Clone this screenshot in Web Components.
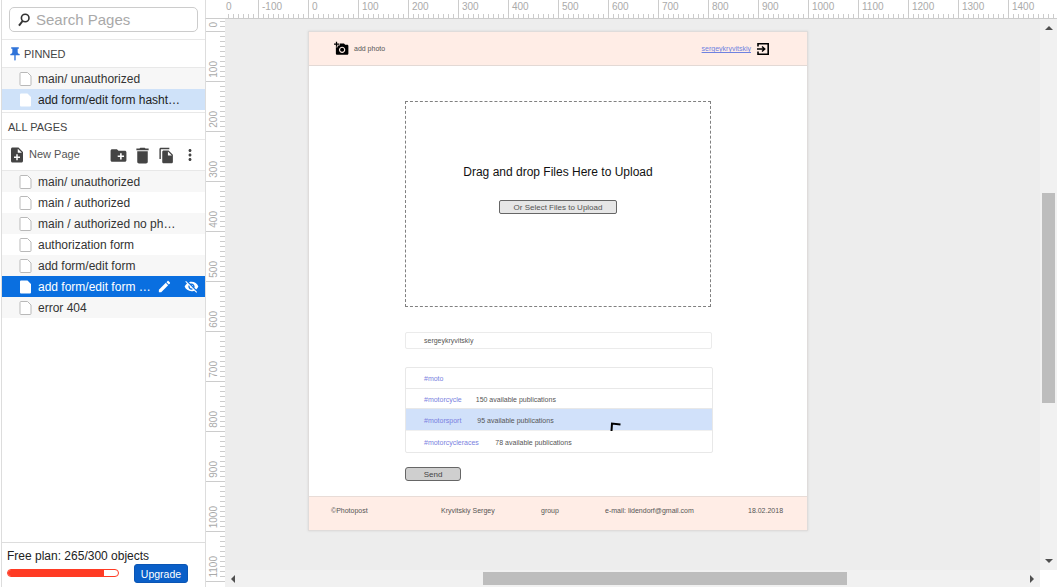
<!DOCTYPE html>
<html>
<head>
<meta charset="utf-8">
<title>Pages</title>
<style>
  html, body { margin: 0; height: 100%; overflow: hidden; background: #fff; }
  body { font-family: "Liberation Sans", Arial, sans-serif; }
</style>
</head>
<body>

<app-shell>
  <page-sidebar slot="sidebar">
    <search-box></search-box>
    <section-head pinned>PINNED</section-head>
    <page-row alt>main/ unauthorized</page-row>
    <page-row state="selected">add form/edit form hasht…</page-row>
    <section-head class="all">ALL PAGES</section-head>
    <page-toolbar></page-toolbar>
    <page-row alt>main/ unauthorized</page-row>
    <page-row>main / authorized</page-row>
    <page-row alt>main / authorized no ph…</page-row>
    <page-row>authorization form</page-row>
    <page-row alt>add form/edit form</page-row>
    <page-row state="active">add form/edit form …</page-row>
    <page-row alt>error 404</page-row>
    <plan-meter slot="bottom"></plan-meter>
  </page-sidebar>

  <mock-page slot="canvas">
    <mock-header></mock-header>
    <mock-main>
      <drop-zone></drop-zone>
      <mock-input>sergeykryvitskiy</mock-input>
      <tag-list>
        <tag-row name="#moto"></tag-row>
        <tag-row name="#motorcycle" count="150 available publications" style="--gap: 14px; --h: 20px"></tag-row>
        <tag-row name="#motorsport" count="95 available publications" style="--gap: 16px" hover></tag-row>
        <tag-row name="#motorcycleraces" count="78 available publications" style="--gap: 16.5px"></tag-row>
      </tag-list>
      <mock-button send>Send</mock-button>
    </mock-main>
    <mock-footer></mock-footer>
  </mock-page>
</app-shell>

<script>
  const icons = {
    note: 'M14 2H6c-1.1 0-1.99.9-1.99 2L4 20c0 1.1.89 2 1.99 2H18c1.1 0 2-.9 2-2V8l-6-6zm2 14h-3v3h-2v-3H8v-2h3v-3h2v3h3v2zm-3-7V3.5L18.5 9H13z',
    folder: 'M20 6h-8l-2-2H4c-1.11 0-1.99.89-1.99 2L2 18c0 1.11.89 2 2 2h16c1.11 0 2-.89 2-2V8c0-1.11-.89-2-2-2zm-1 8h-3v3h-2v-3h-3v-2h3V9h2v3h3v2z',
    trash: 'M6 19c0 1.1.9 2 2 2h8c1.1 0 2-.9 2-2V7H6v12zM19 4h-3.5l-1-1h-5l-1 1H5v2h14V4z',
    copy: 'M16 1H4c-1.1 0-2 .9-2 2v14h2V3h12V1zm-1 4l6 6v10c0 1.1-.9 2-2 2H7.99C6.89 23 6 22.1 6 21l.01-14c0-1.1.89-2 1.99-2h7zm-1 7h5.5L14 6.5V12z',
    more: 'M12 8c1.1 0 2-.9 2-2s-.9-2-2-2-2 .9-2 2 .9 2 2 2zm0 2c-1.1 0-2 .9-2 2s.9 2 2 2 2-.9 2-2-.9-2-2-2zm0 6c-1.1 0-2 .9-2 2s.9 2 2 2 2-.9 2-2-.9-2-2-2z',
    edit: 'M3 17.25V21h3.75L17.81 9.94l-3.75-3.75L3 17.25zM20.71 7.04c.39-.39.39-1.02 0-1.41l-2.34-2.34c-.39-.39-1.02-.39-1.41 0l-1.83 1.83 3.75 3.75 1.83-1.83z',
    eyeOff: 'M12 7c2.76 0 5 2.24 5 5 0 .65-.13 1.26-.36 1.83l2.92 2.92c1.51-1.26 2.7-2.89 3.43-4.75-1.73-4.39-6-7.5-11-7.5-1.4 0-2.74.25-3.98.7l2.16 2.16C10.74 7.13 11.35 7 12 7zM2 4.27l2.28 2.28.46.46C3.08 8.3 1.78 10.02 1 12c1.73 4.39 6 7.5 11 7.5 1.55 0 3.03-.3 4.38-.84l.42.42L19.73 22 21 20.73 3.27 3 2 4.27zM7.53 9.8l1.55 1.55c-.05.21-.08.43-.08.65 0 1.66 1.34 3 3 3 .22 0 .44-.03.65-.08l1.55 1.55c-.67.33-1.41.53-2.2.53-2.76 0-5-2.24-5-5 0-.79.2-1.53.53-2.2zm4.31-.78l3.15 3.15.02-.16c0-1.66-1.34-3-3-3l-.17.01z',
    pin: 'M16 9V4h1c.55 0 1-.45 1-1s-.45-1-1-1H7c-.55 0-1 .45-1 1s.45 1 1 1h1v5c0 1.66-1.34 3-3 3v2h5.97v7l1 1 1-1v-7H19v-2c-1.66 0-3-1.34-3-3z',
    camera: 'M3 4V1h2v3h3v2H5v3H3V6H0V4h3zm3 6V7h3V4h7l1.83 2H21c1.1 0 2 .9 2 2v12c0 1.1-.9 2-2 2H5c-1.1 0-2-.9-2-2V10h3zm7 9c2.76 0 5-2.24 5-5s-2.24-5-5-5-5 2.24-5 5 2.24 5 5 5zm-3.2-5c0 1.77 1.43 3.2 3.2 3.2s3.2-1.43 3.2-3.2-1.43-3.2-3.2-3.2-3.2 1.43-3.2 3.2z'
  };

  const svg = (name, size, color) =>
    `<svg width="${size}" height="${size}" viewBox="0 0 24 24" fill="${color}" style="display:block;flex:none"><path d="${icons[name]}"/></svg>`;

  // every element here is just a shadow root with fixed markup, so share the plumbing
  function define(tag, markup) {
    customElements.define(tag, class extends HTMLElement {
      constructor() {
        super();
        this.shadow = this.attachShadow({ mode: 'open' });
        this.shadow.innerHTML = typeof markup === 'function' ? markup(this) : markup;
      }
    });
  }

  define('app-shell', `
    <style>
      :host { display: flex; width: 1057px; height: 587px; overflow: hidden; }
      .work { flex: 1; min-width: 0; display: flex; flex-direction: column; }
      .body { flex: 1; min-height: 0; display: flex; }
      .col { flex: 1; min-width: 0; display: flex; flex-direction: column; }
      .row { flex: 1; min-height: 0; display: flex; }
    </style>
    <slot name="sidebar"></slot>
    <div class="work">
      <ruler-top></ruler-top>
      <div class="body">
        <ruler-side></ruler-side>
        <div class="col">
          <div class="row">
            <design-canvas><slot name="canvas"></slot></design-canvas>
            <scroll-v></scroll-v>
          </div>
          <scroll-h></scroll-h>
        </div>
      </div>
    </div>`);

  define('page-sidebar', `
    <style>
      :host { display: flex; flex-direction: column; flex: none; box-sizing: border-box; width: 205px; height: 587px; padding-left: 1px; background: #fff; }
      .inner { flex: 1; display: flex; flex-direction: column; border-left: 1px solid #ddd; min-height: 0; }
      .grow { flex: 1; }
    </style>
    <div class="inner">
      <slot></slot>
      <div class="grow"></div>
      <slot name="bottom"></slot>
    </div>`);

  define('search-box', `
    <style>
      :host { display: block; height: 40px; box-sizing: border-box; padding: 7px 7px 0 7px; border-bottom: 1px solid #e8e8e8; }
      .box { height: 25px; box-sizing: border-box; border: 1px solid #ccc; border-radius: 5px; display: flex; align-items: center; padding-left: 8px; gap: 6px; width: 189px; }
      span { font-size: 15px; color: #a9a9a9; }
    </style>
    <div class="box">
      <svg width="12" height="14" viewBox="0 0 12 14" fill="none" stroke="#333" stroke-width="1.6"><circle cx="7.2" cy="5" r="3.8"/><path d="M4.6 8L1 12.6" stroke-width="2"/></svg>
      <span>Search Pages</span>
    </div>`);

  define('section-head', host => `
    <style>
      :host { display: flex; align-items: center; box-sizing: border-box; height: 28px; font-size: 11px; color: #444; border-bottom: 1px solid #e8e8e8; }
      :host([pinned]) { padding-left: 5px; }
      :host(.all) { margin-top: 2px; padding: 1px 0 0 6px; border-top: 1px solid #e8e8e8; }
      svg { margin-right: 1px; }
    </style>
    ${host.hasAttribute('pinned') ? svg('pin', 16, '#2f73d9') : ''}<slot></slot>`);

  define('page-row', host => {
    const state = host.getAttribute('state');
    const doc = state
      ? '<path d="M1 1.5a1 1 0 0 1 1-1h6.5L12 4v8.5a1 1 0 0 1-1 1H2a1 1 0 0 1-1-1z" fill="#fff"/>'
      : '<path d="M1 1.5a1 1 0 0 1 1-1h6.5L12 4v8.5a1 1 0 0 1-1 1H2a1 1 0 0 1-1-1z" fill="#fff" stroke="#b9b9b9"/>';
    return `
    <style>
      :host { display: flex; align-items: center; height: 21px; padding-left: 17px; font-size: 12px; color: #333; white-space: nowrap; }
      :host([alt]) { background: #f7f7f7; }
      :host([state="selected"]) { background: #cfe2f9; color: #222; }
      :host([state="active"]) { background: #0a6fe0; color: #fff; }
      .doc { margin-right: 6px; }
      .text { flex: 1; }
      .tools { display: flex; align-items: center; gap: 12px; padding-right: 6px; }
    </style>
    <svg class="doc" width="13" height="14" viewBox="0 0 13 14">${doc}</svg>
    <span class="text"><slot></slot></span>
    ${state === 'active' ? `<span class="tools">${svg('edit', 15, '#fff')}${svg('eyeOff', 15, '#fff')}</span>` : ''}`;
  });

  define('page-toolbar', `
    <style>
      :host { display: flex; align-items: center; box-sizing: border-box; height: 31px; padding: 0 3px 0 6px; border-bottom: 1px solid #e8e8e8; }
      .label { font-size: 11px; color: #555; margin: 0 0 2px 3px; }
      .grow { flex: 1; }
      .cell { width: 24px; display: flex; justify-content: center; }
    </style>
    ${svg('note', 18, '#444')}
    <span class="label">New Page</span>
    <span class="grow"></span>
    <span class="cell">${svg('folder', 19, '#444')}</span>
    <span class="cell">${svg('trash', 21, '#444')}</span>
    <span class="cell">${svg('copy', 17, '#444')}</span>
    <span class="cell">${svg('more', 18, '#444')}</span>`);

  define('plan-meter', `
    <style>
      :host { display: block; box-sizing: border-box; height: 45px; padding: 6px 0 0 5px; border-top: 1px solid #ddd; font-size: 12px; color: #222; }
      .line { display: flex; margin-top: 1px; }
      .bar { width: 112px; height: 8px; box-sizing: border-box; border: 1px solid #ff3b24; border-radius: 4px; background: #fff; margin-top: 5px; overflow: hidden; }
      .fill { width: 87%; height: 100%; background: #ff3b24; }
      .btn { margin-left: 15px; width: 54px; height: 19px; border-radius: 3px; background: #0a5fc8; color: #fff; font-size: 10.5px; display: flex; align-items: center; justify-content: center; border: 1px solid #0a55b4; box-sizing: border-box; }
    </style>
    <div>Free plan: 265/300 objects</div>
    <div class="line">
      <div class="bar"><div class="fill"></div></div>
      <div class="btn">Upgrade</div>
    </div>`);

  const rulerBase = `font-size: 10px; color: #aaa;`;

  define('ruler-top', () => {
    // the first mark sits under the corner, only its trailing 0 shows in the reference
    let segs = '<div class="seg first"><span>0</span></div>';
    for (let v = -100; v <= 1400; v += 100) segs += `<div class="seg"><span>${v}</span></div>`;
    return `
    <style>
      :host { display: flex; flex: none; height: 19px; box-sizing: border-box; border-bottom: 1px solid #ccc; border-left: 1px solid #ddd; background: #fff; ${rulerBase} }
      .corner { width: 19px; flex: none; }
      .track { flex: 1; min-width: 0; overflow: hidden; display: flex; }
      .seg { flex: none; width: 50px; height: 18px; box-sizing: border-box; border-left: 1px solid #ccc; padding-left: 3px; line-height: 14px;
        background: repeating-linear-gradient(90deg, #ccc 0 1px, transparent 1px 5px) left 4px bottom 0 / 100% 4px no-repeat; }
      .seg.first { margin-left: -17px; padding-left: 17px; }
      .seg:last-child { overflow: hidden; }
    </style>
    <div class="corner"></div>
    <div class="track">${segs}</div>`;
  });

  define('ruler-side', () => {
    let segs = '';
    for (let v = 0; v <= 1100; v += 100) segs += `<div class="seg"><span>${v}</span></div>`;
    return `
    <style>
      :host { display: block; flex: none; width: 20px; overflow: hidden; box-sizing: border-box; border-left: 1px solid #ddd; background: #fff; ${rulerBase} }
      .seg { height: 50px; box-sizing: border-box; border-bottom: 1px solid #ccc; display: flex; align-items: flex-end; padding: 0 0 3px 1px;
        background: repeating-linear-gradient(180deg, transparent 0 4px, #ccc 4px 5px) right 0 top 0 / 5px 100% no-repeat; }
      .seg:first-of-type { margin-top: -37px; }
      span { writing-mode: vertical-rl; transform: rotate(180deg); line-height: 14px; }
    </style>
    ${segs}`;
  });

  define('design-canvas', `
    <style>
      :host { display: block; flex: 1; min-width: 0; overflow: hidden; box-sizing: border-box; padding: 12px 0 0 83px; background: #ededed; }
    </style>
    <slot></slot>`);

  define('scroll-v', `
    <style>
      :host { display: flex; flex-direction: column; align-items: center; flex: none; width: 17px; background: #f1f1f1; }
      .up { margin-top: 7px; border: 4px solid transparent; border-top: 0; border-bottom: 4px solid #505050; }
      .thumb { width: 13px; height: 210px; margin-top: 163px; background: #bdbdbd; }
      .down { margin-top: auto; margin-bottom: 7px; border: 4px solid transparent; border-bottom: 0; border-top: 4px solid #505050; }
    </style>
    <div class="up"></div><div class="thumb"></div><div class="down"></div>`);

  define('scroll-h', `
    <style>
      :host { display: flex; align-items: center; flex: none; height: 17px; background: #f1f1f1; }
      .left { margin-left: 6px; border: 4px solid transparent; border-left: 0; border-right: 4px solid #505050; }
      .thumb { width: 364px; height: 13px; margin-left: 248px; background: #bdbdbd; }
      .right { margin-left: auto; margin-right: 6px; border: 4px solid transparent; border-right: 0; border-left: 4px solid #505050; }
      .corner { width: 17px; height: 17px; background: #fff; }
    </style>
    <div class="left"></div><div class="thumb"></div><div class="right"></div>
    <div class="corner"></div>`);

  define('mock-page', `
    <style>
      :host { display: flex; flex-direction: column; width: 500px; height: 500px; box-sizing: border-box; background: #fff; border: 1px solid #dfdcdb; box-shadow: 0 0 2px #d4d4d4; font-size: 7px; color: #555; }
    </style>
    <slot></slot>`);

  define('mock-header', `
    <style>
      :host { display: flex; align-items: center; flex: none; height: 34px; box-sizing: border-box; padding: 0 38px 0 25px; background: #ffede6; border-bottom: 1px solid #e3d9d5; }
      svg { margin-right: 5px; }
      a { color: #6f82e0; text-decoration: underline; margin-left: auto; margin-right: 6px; }
      .exit { margin: 0; }
    </style>
    ${svg('camera', 15, '#000')}
    <span>add photo</span>
    <a>sergeykryvitskiy</a>
    <svg class="exit" width="12" height="12" viewBox="0 0 12 12" fill="none" stroke="#000"><path d="M1 3.5V.8h10.2v10.4H1V8.5" stroke-width="1.6"/><path d="M0 6h7.5M5 3.4L7.8 6 5 8.6" stroke-width="1.4"/></svg>`);

  define('mock-main', `
    <style>
      :host { display: flex; flex-direction: column; align-items: flex-start; flex: 1; min-height: 0; padding: 35px 0 0 96px; }
    </style>
    <slot></slot>`);

  define('drop-zone', `
    <style>
      :host { display: flex; flex-direction: column; align-items: center; box-sizing: border-box; width: 306px; height: 206px; border: 1px dashed #808080; padding-top: 63px; }
      .title { font-size: 12px; color: #111; line-height: 14px; }
      mock-button { margin-top: 21px; }
    </style>
    <div class="title">Drag and drop Files Here to Upload</div>
    <mock-button>Or Select Files to Upload</mock-button>`);

  define('mock-button', `
    <style>
      :host { display: flex; align-items: center; justify-content: center; box-sizing: border-box; width: 118px; height: 14px; border: 1px solid #666; border-radius: 2px; background: #e6e6e6; font-size: 8px; color: #555; }
      :host([send]) { width: 56px; margin-top: 14px; background: #cfcfcf; border-radius: 3px; color: #444; }
    </style>
    <slot></slot>`);

  define('mock-input', `
    <style>
      :host { display: flex; align-items: center; box-sizing: border-box; width: 307px; height: 17px; margin-top: 25px; padding-left: 18px; border: 1px solid #ebebeb; border-radius: 2px; }
    </style>
    <slot></slot>`);

  define('tag-list', `
    <style>
      :host { display: block; box-sizing: border-box; width: 308px; height: 86px; margin-top: 18px; border: 1px solid #e8e8e8; border-radius: 2px; }
    </style>
    <slot></slot>`);

  define('tag-row', host => `
    <style>
      :host { display: flex; align-items: center; position: relative; box-sizing: border-box; height: var(--h, 21px); padding-left: 18px; border-bottom: 1px solid #e8e8e8; }
      :host([count]) { padding-top: 2px; }
      :host(:last-child) { border-bottom: 0; }
      :host([hover]) { background: #d1e1fa; height: 22px; border-bottom-color: #f0f0f0; }
      .tag { color: #7a7fe0; }
      .count { margin-left: var(--gap, 0); color: #555; }
      .cursor { position: absolute; left: 204px; top: 13px; }
    </style>
    <span class="tag">${host.getAttribute('name')}</span>
    <span class="count">${host.getAttribute('count') || ''}</span>
    ${host.hasAttribute('hover') ? '<svg class="cursor" width="11" height="9" viewBox="0 0 11 9" fill="none" stroke="#000" stroke-width="2"><path d="M1.5 9L2 1.5l8.5 1"/></svg>' : ''}`);

  define('mock-footer', `
    <style>
      :host { display: grid; grid-template-columns: 110px 100px 64px 143px auto; align-items: center; flex: none; height: 34px; box-sizing: border-box; padding: 0 0 7px 22px; background: #ffede6; border-top: 1px solid #e8dcd7; }
    </style>
    <span>©Photopost</span>
    <span>Kryvitskiy Sergey</span>
    <span>group</span>
    <span>e-mail: lidendorf@gmail.com</span>
    <span>18.02.2018</span>`);
</script>
</body>
</html>
